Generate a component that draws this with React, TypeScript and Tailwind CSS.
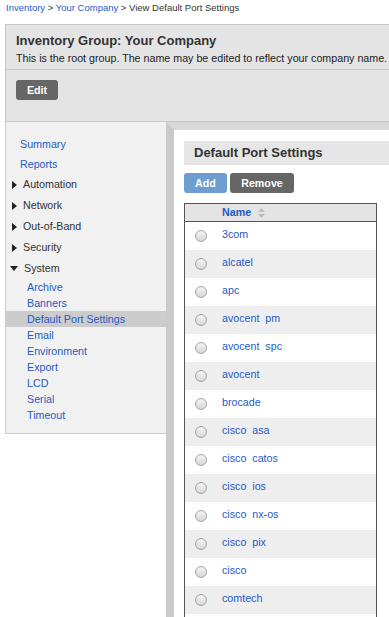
const link = "text-[#1f5bc8]";

const groups = ["Automation", "Network", "Out-of-Band", "Security"];
const systemItems = [
  "Archive",
  "Banners",
  "Default Port Settings",
  "Email",
  "Environment",
  "Export",
  "LCD",
  "Serial",
  "Timeout",
];
const ports = [
  "3com",
  "alcatel",
  "apc",
  "avocent  pm",
  "avocent  spc",
  "avocent",
  "brocade",
  "cisco  asa",
  "cisco  catos",
  "cisco  ios",
  "cisco  nx-os",
  "cisco  pix",
  "cisco",
  "comtech",
];

function RightArrow() {
  return (
    <svg width="5" height="8" viewBox="0 0 5 8" className="shrink-0">
      <path d="M0 0 L5 4 L0 8 Z" fill="#222" />
    </svg>
  );
}

function DownArrow() {
  return (
    <svg width="8" height="5" viewBox="0 0 8 5" className="shrink-0">
      <path d="M0 0 L8 0 L4 5 Z" fill="#222" />
    </svg>
  );
}

function SortIcon() {
  return (
    <svg width="7" height="10" viewBox="0 0 7 10" className="ml-[7px]">
      <path d="M0 4 L3.5 0 L7 4 Z" fill="#bdbdbd" />
      <path d="M0 6 L7 6 L3.5 10 Z" fill="#bdbdbd" />
    </svg>
  );
}

function Radio() {
  return (
    <div className="h-[12px] w-[12px] rounded-full border border-[#a3a3a3] bg-gradient-to-b from-[#f6f6f6] to-[#d6d6d6]" />
  );
}

function Sidebar() {
  return (
    <div className="w-[161px] shrink-0 self-start border-b border-l border-[#cccccc] bg-[#f1f1f1] pb-[10px] pt-[12px] text-[10.7px]">
      <div className={`h-5 pl-[14px] leading-5 ${link}`}>Summary</div>
      <div className={`h-5 pl-[14px] leading-5 ${link}`}>Reports</div>
      {groups.map((g) => (
        <div key={g} className="flex h-[21px] items-center gap-[6px] pl-[6px] text-[#333]">
          <RightArrow />
          <span>{g}</span>
        </div>
      ))}
      <div className="flex h-[21px] items-center gap-[6px] pl-[4px] text-[#333]">
        <DownArrow />
        <span>System</span>
      </div>
      {systemItems.map((s) => (
        <div
          key={s}
          className={`h-4 pl-[21px] leading-4 ${link} ${s === "Default Port Settings" ? "bg-[#cccccc]" : ""}`}
        >
          {s}
        </div>
      ))}
    </div>
  );
}

function PortTable() {
  return (
    <div className="mt-[10px] w-[193px] border border-[#555]">
      <div className="flex h-[18px] items-center border-b border-[#555] bg-[#e4e4e4]">
        <div className="w-[37px]" />
        <span className={`text-[10.7px] font-bold ${link}`}>Name</span>
        <SortIcon />
      </div>
      {ports.map((p, i) => (
        <div key={p} className={`flex h-7 items-start ${i % 2 === 1 ? "bg-[#eeeeee]" : "bg-white"}`}>
          <div className="w-[37px] pl-[10px] pt-[8px]">
            <Radio />
          </div>
          <span className={`whitespace-pre pt-[5px] text-[10.7px] leading-[14px] ${link}`}>{p}</span>
        </div>
      ))}
      <div className="h-7 bg-white" />
    </div>
  );
}

export default function App() {
  return (
    <div className="h-[617px] w-[389px] overflow-hidden bg-white font-['Liberation_Sans',Arial,sans-serif] text-[#333]">
      <div className="w-[440px]">
        <div className="h-6 pl-[6px] pt-[2px] text-[9.5px] leading-[12px] text-[#333]">
          <span className={link}>Inventory</span> &gt; <span className={link}>Your Company</span> &gt; View
          Default Port Settings
        </div>

        <div className="ml-[5px] h-[98px] border-b border-l border-t border-[#c8c8c8] bg-[#e4e4e4]">
          <div className="px-[10px] pt-[8px]">
            <div className="text-[13px] font-bold leading-4 text-[#333]">Inventory Group: Your Company</div>
            <div className="mt-[2px] text-[10.7px] leading-[14px] text-[#222]">
              This is the root group. The name may be edited to reflect your company name.
            </div>
          </div>
          <div className="mt-[4px] h-px bg-[#c8c8c8]" />
          <div className="px-[10px] pt-[7px]">
            <button className="h-5 w-[42px] rounded-[3px] bg-[#666] text-[10.7px] font-bold text-white">Edit</button>
          </div>
        </div>

        <div className="ml-[5px] flex">
          <Sidebar />
          <div className="min-h-[500px] flex-1 border-t-8 border-l-8 border-t-[#d9d9d9] border-l-[#cacaca]">
            <div className="bg-white pl-[10px] pt-[11px]">
              <div className="h-6 bg-[#e6e6e6] pl-[10px] text-[13px] font-bold leading-6 text-[#333]">
                Default Port Settings
              </div>
              <div className="mt-[8px] flex gap-[3px]">
                <button className="h-5 w-[43px] rounded-[3px] bg-[#6c9fd0] text-[10.7px] font-bold text-white">Add</button>
                <button className="h-5 w-[64px] rounded-[3px] bg-[#666] text-[10.7px] font-bold text-white">Remove</button>
              </div>
              <PortTable />
            </div>
          </div>
        </div>
      </div>
    </div>
  );
}
